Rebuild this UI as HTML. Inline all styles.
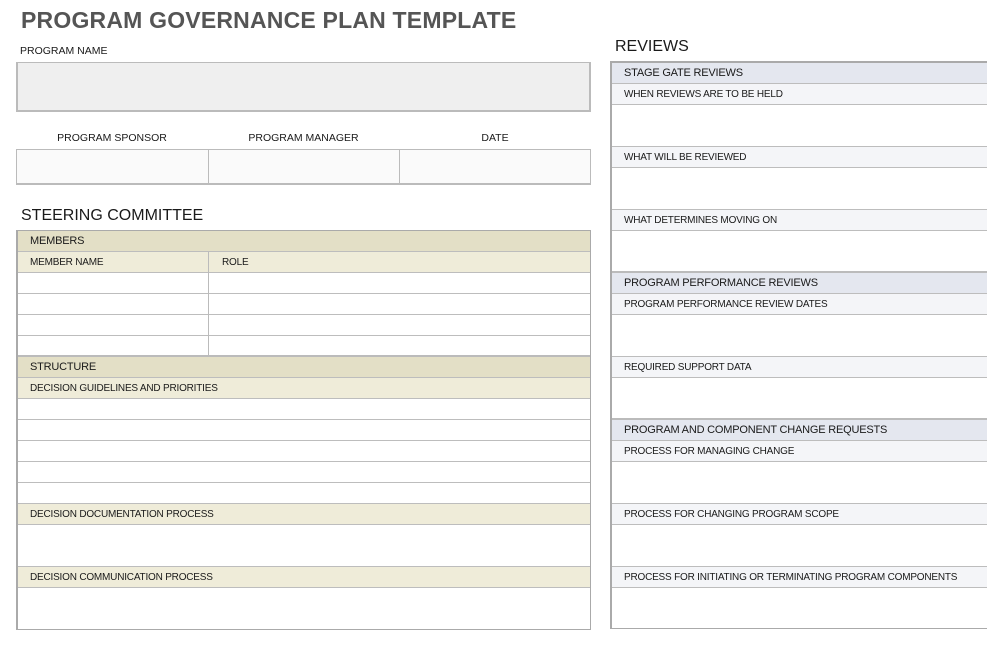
<!DOCTYPE html><html><head><style>
*{margin:0;padding:0;box-sizing:border-box}
body{width:987px;height:652px;background:#fff;font-family:"Liberation Sans",sans-serif;color:#1a1a1a;position:relative;overflow:hidden}
.a{position:absolute}
.t{font-size:10px;letter-spacing:-0.2px;line-height:21px;padding-left:12px;white-space:nowrap}
.h{font-size:11px}
.r{border-bottom:1px solid #bdbdbd}
.d{background:#e3dfc6}.l{background:#efecd9}
.bd{background:#e4e7ef}.bl{background:#f4f5f8}
</style></head><body>
<div class="a" style="left:21px;top:7px;font-size:23px;font-weight:bold;color:#555;letter-spacing:0.2px">PROGRAM GOVERNANCE PLAN TEMPLATE</div>
<div class="a" style="left:20px;top:45px;font-size:10.5px">PROGRAM NAME</div>
<div class="a" style="left:16px;top:62px;width:575px;height:50px;background:#efefef;border:2px solid #bbb;border-top-width:1px"></div>
<div class="a" style="left:16px;top:132px;width:192px;text-align:center;font-size:10.5px">PROGRAM SPONSOR</div>
<div class="a" style="left:208px;top:132px;width:191px;text-align:center;font-size:10.5px">PROGRAM MANAGER</div>
<div class="a" style="left:399px;top:132px;width:192px;text-align:center;font-size:10.5px">DATE</div>
<div class="a" style="left:16px;top:149px;width:575px;height:36px;background:#fafafa;border:1px solid #bbb;border-bottom:2px solid #bbb"></div>
<div class="a" style="left:208px;top:149px;width:1px;height:35px;background:#bbb"></div>
<div class="a" style="left:399px;top:149px;width:1px;height:35px;background:#bbb"></div>
<div class="a" style="left:21px;top:207px;font-size:16px">STEERING COMMITTEE</div>
<div class="a" style="left:16px;top:230px;width:575px;height:400px;border:1px solid #aaa;border-left-width:2px">
<div class="a r d t h" style="top:0;width:100%;height:21px">MEMBERS</div>
<div class="a r l t" style="top:21px;width:100%;height:21px">MEMBER NAME</div>
<div class="a t" style="top:21px;left:192px;height:21px">ROLE</div>
<div class="a r" style="top:42px;width:100%;height:21px"></div>
<div class="a r" style="top:63px;width:100%;height:21px"></div>
<div class="a r" style="top:84px;width:100%;height:21px"></div>
<div class="a" style="top:105px;width:100%;height:21px;border-bottom:2px solid #bbb"></div>
<div class="a" style="top:21px;left:190px;width:1px;height:105px;background:#bbb"></div>
<div class="a r d t h" style="top:126px;width:100%;height:21px">STRUCTURE</div>
<div class="a r l t" style="top:147px;width:100%;height:21px">DECISION GUIDELINES AND PRIORITIES</div>
<div class="a r" style="top:168px;width:100%;height:21px"></div>
<div class="a r" style="top:189px;width:100%;height:21px"></div>
<div class="a r" style="top:210px;width:100%;height:21px"></div>
<div class="a r" style="top:231px;width:100%;height:21px"></div>
<div class="a r" style="top:252px;width:100%;height:21px"></div>
<div class="a r l t" style="top:273px;width:100%;height:21px">DECISION DOCUMENTATION PROCESS</div>
<div class="a r" style="top:294px;width:100%;height:42px"></div>
<div class="a r l t" style="top:336px;width:100%;height:21px">DECISION COMMUNICATION PROCESS</div>
</div>
<div class="a" style="left:615px;top:38px;font-size:16px">REVIEWS</div>
<div class="a" style="left:610px;top:61px;width:380px;height:568px;border:1px solid #aaa;border-left-width:2px;border-top-width:2px">
<div class="a r bd t h" style="top:0;width:100%;height:21px">STAGE GATE REVIEWS</div>
<div class="a r bl t" style="top:21px;width:100%;height:21px">WHEN REVIEWS ARE TO BE HELD</div>
<div class="a r" style="top:42px;width:100%;height:42px"></div>
<div class="a r bl t" style="top:84px;width:100%;height:21px">WHAT WILL BE REVIEWED</div>
<div class="a r" style="top:105px;width:100%;height:42px"></div>
<div class="a r bl t" style="top:147px;width:100%;height:21px">WHAT DETERMINES MOVING ON</div>
<div class="a" style="top:168px;width:100%;height:42px;border-bottom:2px solid #bbb"></div>
<div class="a r bd t h" style="top:210px;width:100%;height:21px">PROGRAM PERFORMANCE REVIEWS</div>
<div class="a r bl t" style="top:231px;width:100%;height:21px">PROGRAM PERFORMANCE REVIEW DATES</div>
<div class="a r" style="top:252px;width:100%;height:42px"></div>
<div class="a r bl t" style="top:294px;width:100%;height:21px">REQUIRED SUPPORT DATA</div>
<div class="a" style="top:315px;width:100%;height:42px;border-bottom:2px solid #bbb"></div>
<div class="a r bd t h" style="top:357px;width:100%;height:21px">PROGRAM AND COMPONENT CHANGE REQUESTS</div>
<div class="a r bl t" style="top:378px;width:100%;height:21px">PROCESS FOR MANAGING CHANGE</div>
<div class="a r" style="top:399px;width:100%;height:42px"></div>
<div class="a r bl t" style="top:441px;width:100%;height:21px">PROCESS FOR CHANGING PROGRAM SCOPE</div>
<div class="a r" style="top:462px;width:100%;height:42px"></div>
<div class="a r bl t" style="top:504px;width:100%;height:21px">PROCESS FOR INITIATING OR TERMINATING PROGRAM COMPONENTS</div>
</div>
</body></html>
